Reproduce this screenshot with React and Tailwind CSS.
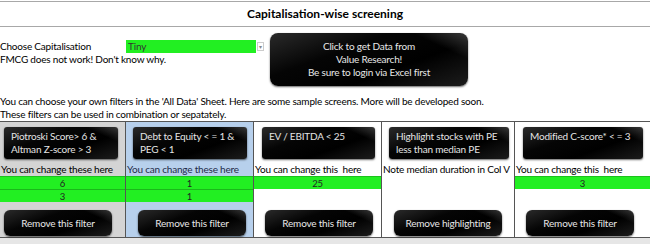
import React from 'react'

const font = { fontFamily: 'Lato, "Open Sans", sans-serif' }

const gloss =
  'bg-[linear-gradient(205deg,rgba(255,255,255,0.22)_0%,rgba(255,255,255,0)_18%),linear-gradient(160deg,#2a2a2a_0%,#050505_35%,#000_65%,#1c1c1c_100%)] shadow-[0_1px_2px_rgba(0,0,0,0.6)]'

const columns = [
  {
    bg: 'bg-[#d4d4d4]',
    title: ['Piotroski Score> 6 &', 'Altman Z-score > 3'],
    note: 'You can change these here',
    noteColor: 'text-black',
    values: ['6', '3'],
    action: 'Remove this filter',
    head: 'ml-[4px] w-[114px]',
    btn: 'ml-[4px] w-[108px]',
  },
  {
    bg: 'bg-[#b7d0ec]',
    title: ['Debt to Equity < = 1 &', 'PEG < 1'],
    note: 'You can change these here',
    noteColor: 'text-[#1f2b4a]',
    values: ['1', '1'],
    action: 'Remove this filter',
    head: 'ml-[7px] w-[114px]',
    btn: 'ml-[12px] w-[108px]',
  },
  {
    bg: 'bg-white',
    title: ['EV / EBITDA < 25'],
    note: 'You can change this  here',
    noteColor: 'text-black',
    values: ['25'],
    action: 'Remove this filter',
    head: 'ml-[8px] w-[113px]',
    btn: 'ml-[11px] w-[108px]',
  },
  {
    bg: 'bg-white',
    title: ['Highlight stocks with PE', 'less than median PE'],
    note: 'Note median duration in Col V',
    noteColor: 'text-black',
    values: [],
    action: 'Remove highlighting',
    head: 'ml-[7px] w-[120px]',
    btn: 'ml-[12px] w-[108px]',
  },
  {
    bg: 'bg-white',
    title: ['Modified C-score* < = 3'],
    note: 'You can change this  here',
    noteColor: 'text-black',
    values: ['3'],
    action: 'Remove this filter',
    head: 'ml-[8px] w-[120px]',
    btn: 'ml-[11px] w-[108px]',
  },
]

const widths = ['w-[126px]', 'w-[128px]', 'w-[128px]', 'w-[133px]', 'w-[135px]']

function FilterColumn({ c, w, last }) {
  return (
    <div className={`${w} ${c.bg} ${last ? '' : 'border-r border-[#555]'} flex flex-col`}>
      <div className={`${c.head} ${gloss} mt-[5px] h-[32px] whitespace-nowrap rounded-[3px] px-[7px] pt-[3px] leading-[13px] text-[#e4e4e4]`}>
        {c.title.map((t) => (
          <div key={t}>{t}</div>
        ))}
      </div>
      <div className={`mt-[3px] h-[14px] whitespace-pre pl-[1px] leading-[14px] ${c.noteColor}`}>
        {c.note}
      </div>
      <div className="h-[27px]">
        {c.values.map((v, i) => (
          <div
            key={i}
            className={`h-[13px] bg-[#22ef22] text-center text-[9.5px] leading-[13px] text-[#222] ${i === 0 ? 'border-t border-[#1cc21c]' : 'border-t border-[#1ab81a]'}`}
          >
            {v}
          </div>
        ))}
      </div>
      <div className={`${c.btn} ${gloss} mt-[7px] flex h-[26px] items-center justify-center rounded-[6px] text-[#e8e8e8]`}>
        {c.action}
      </div>
    </div>
  )
}

export default function App() {
  return (
    <div
      className="h-[244px] w-[650px] overflow-hidden bg-white text-[10px] tracking-[-0.2px] text-black"
      style={font}
    >
      <div className="mt-[1px] flex h-[26px] items-center justify-center border-y border-[#a8a8a8]">
        <span className="text-[12px] font-bold tracking-normal">Capitalisation-wise screening</span>
      </div>

      <div className="flex h-[68px]">
        <div className="w-[270px] pt-[13px] leading-[13px]">
          <div className="flex items-center">
            <span className="w-[126px]">Choose Capitalisation</span>
            <div className="flex h-[13px] w-[130px] items-center bg-[#22ef22] pl-[2px] text-[#333]">Tiny</div>
            <div className="ml-[1px] flex h-[9px] w-[7px] items-center justify-center border border-[#ccc] bg-white text-[6px] leading-none text-[#888]">
              ▾
            </div>
          </div>
          <div>FMCG does not work! Don't know why.</div>
        </div>
        <div className={`${gloss} mt-[6px] flex h-[53px] w-[198px] flex-col items-center justify-center rounded-[8px] leading-[13px] text-[#e8e8e8]`}>
          <div>Click to get Data from</div>
          <div>Value Research!</div>
          <div>Be sure to login via Excel first</div>
        </div>
      </div>

      <div className="h-[26px] leading-[13px]">
        <div>You can choose your own filters in the 'All Data' Sheet. Here are some sample screens. More will be developed soon.</div>
        <div>These filters can be used in combination or sepatately.</div>
      </div>

      <div className="flex h-[117px] border-y border-[#555]">
        {columns.map((c, i) => (
          <FilterColumn key={i} c={c} w={widths[i]} last={i === columns.length - 1} />
        ))}
      </div>
      <div className="h-[8px] bg-[#e6e6e6]" />
    </div>
  )
}
